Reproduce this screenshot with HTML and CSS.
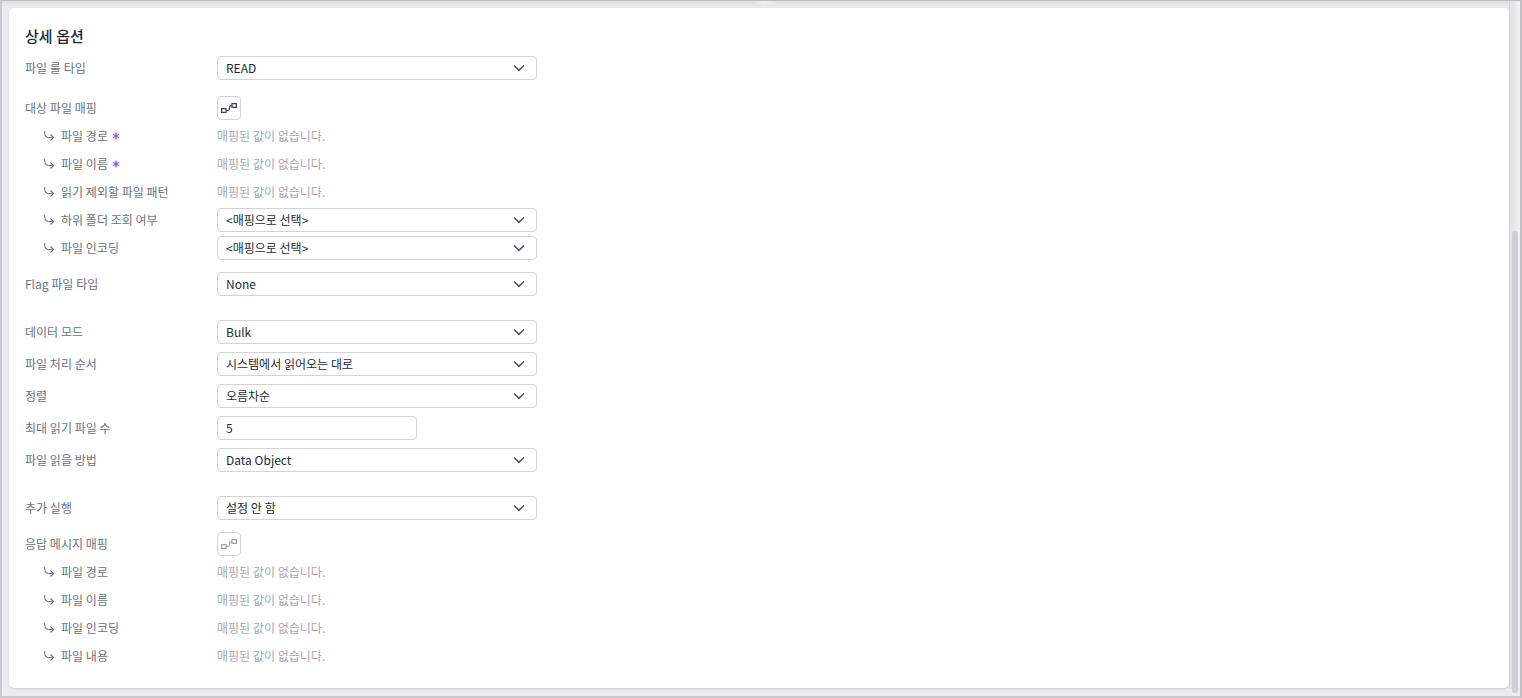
FILE: index.html
```html
<!DOCTYPE html>
<html lang="ko">
  <head>
    <meta charset="UTF-8" />
    <title>상세 옵션</title>
    <link rel="stylesheet" href="styles.css">
  </head>
  <body>
    <svg class="sprites" width="0" height="0">
      <symbol id="chevron" viewBox="0 0 12 12">
        <path d="M1 3.500 6 8.300l5-4.800" fill="none" stroke="currentColor" stroke-width="1.600"/>
      </symbol>
      <symbol id="sub-arrow" viewBox="0 0 12 12">
        <path d="M1.500 1c0 4 1 6.500 4 6.500h5M7.500 4.500l3 3-3 3" fill="none" stroke="currentColor" stroke-width="1.100"/>
      </symbol>
      <symbol id="mapping" viewBox="0 0 16 10">
        <path d="M.6 5.600h4.400v3.800H.6zM11 .6h4.400v3.800H11zM5 7.500h2q1 0 1.200-1L8.800 3.500q.3-1 1.200-1H11" fill="none" stroke="currentColor" stroke-width="1.200"/>
      </symbol>
      <symbol id="star" viewBox="0 0 9 9">
        <path d="M4.500.5v8M1 2.500l7 4M8 2.500l-7 4" fill="none" stroke="currentColor" stroke-width="1.500"/>
      </symbol>
    </svg>

    <div class="frame">
      <main class="panel">
        <h3 class="panel-title">상세 옵션</h3>

        <div class="row">
          <label>파일 룰 타입</label>
          <div class="select">READ<svg class="chevron"><use href="#chevron"/></svg></div>
        </div>

        <div class="row map-row">
          <label>대상 파일 매핑</label>
          <button class="map-btn"><svg class="map-icon"><use href="#mapping"/></svg></button>
        </div>
        <div class="sub-list">
          <div class="sub-row">
            <label><svg class="sub-arrow"><use href="#sub-arrow"/></svg>파일 경로<svg class="star"><use href="#star"/></svg></label>
            <span class="empty">매핑된 값이 없습니다.</span>
          </div>
          <div class="sub-row">
            <label><svg class="sub-arrow"><use href="#sub-arrow"/></svg>파일 이름<svg class="star"><use href="#star"/></svg></label>
            <span class="empty">매핑된 값이 없습니다.</span>
          </div>
          <div class="sub-row">
            <label><svg class="sub-arrow"><use href="#sub-arrow"/></svg>읽기 제외할 파일 패턴</label>
            <span class="empty">매핑된 값이 없습니다.</span>
          </div>
          <div class="sub-row">
            <label><svg class="sub-arrow"><use href="#sub-arrow"/></svg>하위 폴더 조회 여부</label>
            <div class="select">&lt;매핑으로 선택&gt;<svg class="chevron"><use href="#chevron"/></svg></div>
          </div>
          <div class="sub-row">
            <label><svg class="sub-arrow"><use href="#sub-arrow"/></svg>파일 인코딩</label>
            <div class="select">&lt;매핑으로 선택&gt;<svg class="chevron"><use href="#chevron"/></svg></div>
          </div>
        </div>
        <div class="row flag-row">
          <label>Flag 파일 타입</label>
          <div class="select">None<svg class="chevron"><use href="#chevron"/></svg></div>
        </div>

        <div class="group">
          <div class="row">
            <label>데이터 모드</label>
            <div class="select">Bulk<svg class="chevron"><use href="#chevron"/></svg></div>
          </div>
          <div class="row">
            <label>파일 처리 순서</label>
            <div class="select">시스템에서 읽어오는 대로<svg class="chevron"><use href="#chevron"/></svg></div>
          </div>
          <div class="row">
            <label>정렬</label>
            <div class="select">오름차순<svg class="chevron"><use href="#chevron"/></svg></div>
          </div>
          <div class="row">
            <label>최대 읽기 파일 수</label>
            <div class="input">5</div>
          </div>
          <div class="row">
            <label>파일 읽을 방법</label>
            <div class="select">Data Object<svg class="chevron"><use href="#chevron"/></svg></div>
          </div>
        </div>

        <div class="row run-row">
          <label>추가 실행</label>
          <div class="select">설정 안 함<svg class="chevron"><use href="#chevron"/></svg></div>
        </div>

        <div class="row reply-row">
          <label>응답 메시지 매핑</label>
          <button class="map-btn disabled"><svg class="map-icon"><use href="#mapping"/></svg></button>
        </div>
        <div class="sub-list">
          <div class="sub-row">
            <label><svg class="sub-arrow"><use href="#sub-arrow"/></svg>파일 경로</label>
            <span class="empty">매핑된 값이 없습니다.</span>
          </div>
          <div class="sub-row">
            <label><svg class="sub-arrow"><use href="#sub-arrow"/></svg>파일 이름</label>
            <span class="empty">매핑된 값이 없습니다.</span>
          </div>
          <div class="sub-row">
            <label><svg class="sub-arrow"><use href="#sub-arrow"/></svg>파일 인코딩</label>
            <span class="empty">매핑된 값이 없습니다.</span>
          </div>
          <div class="sub-row">
            <label><svg class="sub-arrow"><use href="#sub-arrow"/></svg>파일 내용</label>
            <span class="empty">매핑된 값이 없습니다.</span>
          </div>
        </div>
      </main>

      <div class="scrollbar">
        <div class="scroll-thumb"></div>
      </div>
    </div>
  </body>
</html>
```

FILE: styles.css
```css
* {
  margin: 0;
  padding: 0;
  box-sizing: border-box;
}

html,
body {
  height: 100%;
  overflow: hidden;
}

body {
  background: #e9eaec;
  font-family: "Noto Sans CJK KR", "Noto Sans", sans-serif;
  font-size: 12px;
  word-spacing: -0.6px;
  color: #1f2937;
}

.sprites {
  position: absolute;
}

.frame {
  height: 698px;
  display: flex;
  align-items: flex-start;
  padding: 7px 0 0 7px;
  background:
    radial-gradient(ellipse 14px 5px at 763px 0, #f2f2f3, transparent),
    linear-gradient(to bottom, #dfe0e2, #ebecee 7px);
  border-top: 1px solid #bbbcc0;
  border-left: 2px solid #c9cacd;
  border-right: 2px solid #bfc0c3;
  border-bottom: 2px solid #c9cacd;
}

.panel {
  flex: 1;
  height: 680px;
  padding: 18px 16px;
  background: #fff;
  border-radius: 5px;
  box-shadow: 0 1px 2px rgba(0, 0, 0, 0.12);
}

.panel-title {
  height: 20px;
  margin-bottom: 10px;
  font-size: 15px;
  line-height: 20px;
  font-weight: 500;
  color: #1f2937;
}

.row {
  display: flex;
  align-items: center;
  height: 24px;
}

.row label,
.sub-row label {
  display: flex;
  align-items: center;
  padding-bottom: 2px;
  color: #6b7280;
}

.row label {
  width: 192px;
}

.map-row {
  margin-top: 16px;
}

.flag-row {
  margin-top: 10px;
}

.run-row {
  margin-top: 24px;
}

.reply-row {
  margin-top: 12px;
}

.group {
  display: flex;
  flex-direction: column;
  gap: 8px;
  margin-top: 24px;
}

.sub-list {
  margin-top: 2px;
}

.sub-row {
  display: flex;
  align-items: center;
  height: 28px;
}

.sub-row label {
  width: 192px;
  padding-left: 18px;
}

.sub-arrow {
  width: 12px;
  height: 12px;
  margin: 2px 6px 0 0;
  color: #6b7280;
}

.star {
  width: 8px;
  height: 8px;
  margin: 2px 0 0 4px;
  color: #8b5cf6;
}

.empty {
  padding-bottom: 2px;
  color: #a3a7b0;
}

.select,
.input {
  display: flex;
  align-items: center;
  height: 24px;
  padding: 0 8px 2px;
  background: #fff;
  border: 1px solid #d1d3d8;
  border-radius: 4px;
  color: #1f2937;
}

.select {
  justify-content: space-between;
  width: 320px;
  padding-right: 11px;
}

.input {
  width: 200px;
}

.chevron {
  width: 12px;
  height: 12px;
  margin-bottom: -2px;
  color: #4b5563;
}

.map-btn {
  display: flex;
  align-items: center;
  justify-content: center;
  width: 24px;
  height: 24px;
  background: #fff;
  border: 1px solid #d1d3d8;
  border-radius: 4px;
  color: #374151;
}

.map-btn.disabled {
  color: #9ca3af;
}

.map-icon {
  width: 16px;
  height: 10px;
}

.scrollbar {
  width: 11px;
  height: 100%;
  margin-top: -7px;
  padding: 230px 0 0 2px;
  background: linear-gradient(to right, #e0e1e3, #f2f2f3);
  border-left: 1px solid #d3d4d7;
}

.scroll-thumb {
  width: 6px;
  height: 462px;
  background: #cfd0d5;
  border-radius: 3px;
}
```
